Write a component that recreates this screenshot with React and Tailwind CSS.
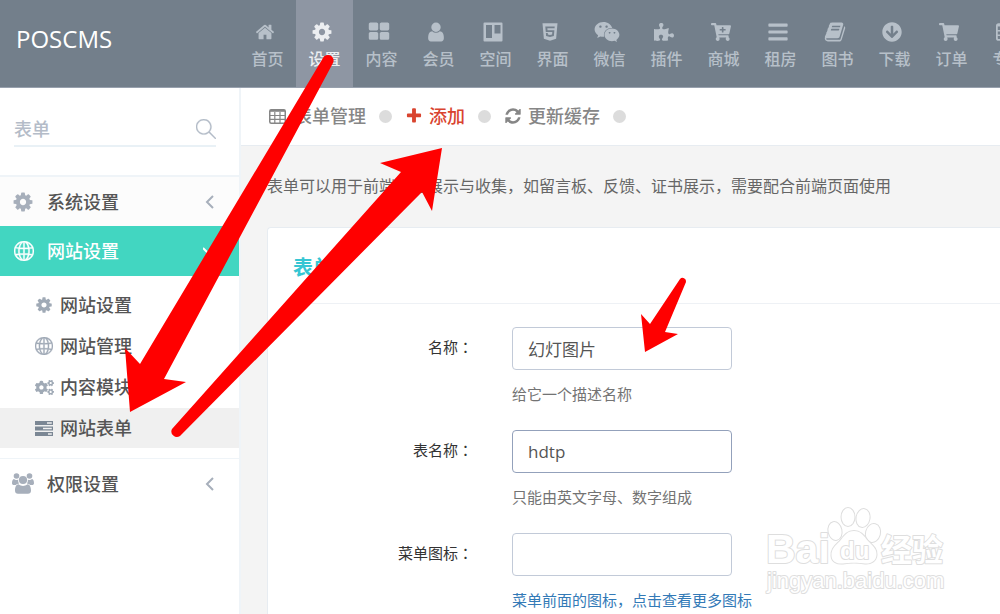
import React, { useState } from 'react';
import {
  FaArrowCircleDown,
  FaBars,
  FaCartPlus,
  FaCogs,
  FaHtml5,
  FaPuzzlePiece,
  FaShoppingCart,
  FaWeixin,
} from 'react-icons/fa';
import { SlGlobe, SlMagnifier } from 'react-icons/sl';

function Glyph({ d, className }) {
  return (
    <svg viewBox="0 0 1792 1792" fill="currentColor" className={className} aria-hidden="true">
      <path d={d} />
    </svg>
  );
}

const HOME = 'M1472 992v480q0 26-19 45t-45 19h-384v-384h-256v384h-384q-26 0-45-19t-19-45v-480q0-1 .5-3t.5-3l575-474 575 474q1 2 1 6zm223-69l-62 74q-8 9-21 11h-3q-13 0-21-7l-692-577-692 577q-12 8-24 7-13-2-21-11l-62-74q-8-10-7-23.5t11-21.5l719-599q32-26 76-26t76 26l244 204v-195q0-14 9-23t23-9h192q14 0 23 9t9 23v408l219 182q10 8 11 21.5t-7 23.5z';
const COG = 'M1152 896q0-106-75-181t-181-75-181 75-75 181 75 181 181 75 181-75 75-181zm512-109v222q0 12-8 23t-20 13l-185 28q-19 54-39 91 35 50 107 138 10 12 10 25t-9 23q-27 37-99 108t-94 71q-12 0-26-9l-138-108q-44 23-91 38-16 136-29 186-7 28-36 28h-222q-14 0-24.5-8.5t-11.5-21.5l-28-184q-49-16-90-37l-141 107q-10 9-25 9-14 0-25-11-126-114-165-168-7-10-7-23 0-12 8-23 15-21 51-66.5t54-70.5q-27-50-41-99l-183-27q-13-2-21-12.5t-8-23.5v-222q0-12 8-23t19-13l186-28q14-46 39-92-40-57-107-138-10-12-10-24 0-10 9-23 26-36 98.5-107.5t94.5-71.5q13 0 26 10l138 107q44-23 91-38 16-136 29-186 7-28 36-28h222q14 0 24.5 8.5t11.5 21.5l28 184q49 16 90 37l142-107q9-9 24-9 13 0 25 10 129 119 165 170 7 8 7 22 0 12-8 23-15 21-51 66.5t-54 70.5q26 50 41 98l183 28q13 2 21 12.5t8 23.5z';
const GRID = 'M832 1024v384q0 52-38 90t-90 38h-512q-52 0-90-38t-38-90v-384q0-52 38-90t90-38h512q52 0 90 38t38 90zm0-768v384q0 52-38 90t-90 38h-512q-52 0-90-38t-38-90v-384q0-52 38-90t90-38h512q52 0 90 38t38 90zm896 768v384q0 52-38 90t-90 38h-512q-52 0-90-38t-38-90v-384q0-52 38-90t90-38h512q52 0 90 38t38 90zm0-768v384q0 52-38 90t-90 38h-512q-52 0-90-38t-38-90v-384q0-52 38-90t90-38h512q52 0 90 38t38 90z';
const USER = 'M1536 1399q0 109-62.5 187t-150.5 78h-854q-88 0-150.5-78t-62.5-187q0-85 8.5-160.5t31.5-152 58.5-131 94-89 134.5-34.5q131 128 313 128t313-128q76 0 134.5 34.5t94 89 58.5 131 31.5 152 8.5 160.5zm-256-887q0 159-112.5 271.5t-271.5 112.5-271.5-112.5-112.5-271.5 112.5-271.5 271.5-112.5 271.5 112.5 112.5 271.5z';
const BOOK = 'M1703 478q40 57 18 129l-275 906q-19 64-76.5 107.5t-122.5 43.5h-923q-77 0-148.5-53.5t-99.5-131.5q-24-67-2-127 0-4 3-27t4-37q1-8-3-21.5t-3-19.5q2-11 8-21t16.5-23.5 16.5-23.5q23-38 45-91.5t30-91.5q3-10 .5-30t-.5-28q3-11 17-28t17-23q21-36 42-92t25-90q1-9-2.5-32t.5-28q4-13 22-30.5t22-22.5q19-26 42.5-84.5t27.5-96.5q1-8-3-25.5t-2-26.5q2-8 9-18t18-23 17-21q8-12 16.5-30.5t15-35 16-36 19.5-32 26.5-23.5 36-11.5 47.5 5.5l-1 3q38-9 51-9h761q74 0 114 56t18 130l-274 906q-36 119-71.5 153.5t-128.5 34.5h-869q-27 0-38 15-11 16-1 43 24 70 144 70h923q29 0 56-15.5t35-41.5l300-987q7-22 5-57 38 15 59 43zm-1064 2q-4 13 2 22.5t20 9.5h608q13 0 25.5-9.5t16.5-22.5l21-64q4-13-2-22.5t-20-9.5h-608q-13 0-25.5 9.5t-16.5 22.5zm-83 256q-4 13 2 22.5t20 9.5h608q13 0 25.5-9.5t16.5-22.5l21-64q4-13-2-22.5t-20-9.5h-608q-13 0-25.5 9.5t-16.5 22.5z';
const PLUS = 'M1600 736v192q0 40-28 68t-68 28h-416v416q0 40-28 68t-68 28h-192q-40 0-68-28t-28-68v-416h-416q-40 0-68-28t-28-68v-192q0-40 28-68t68-28h416v-416q0-40 28-68t68-28h192q40 0 68 28t28 68v416h416q40 0 68 28t28 68z';
const REFRESH = 'M1639 1056q0 5-1 7-64 268-268 434.5t-478 166.5q-146 0-282.5-55t-243.5-157l-129 129q-19 19-45 19t-45-19-19-45v-448q0-26 19-45t45-19h448q26 0 45 19t19 45-19 45l-137 137q71 66 161 102t187 36q134 0 250-65t186-179q11-17 53-117 8-23 30-23h192q13 0 22.5 9.5t9.5 22.5zm25-800v448q0 26-19 45t-45 19h-448q-26 0-45-19t-19-45 19-45l138-138q-148-137-349-137-134 0-250 65t-186 179q-11 17-53 117-8 23-30 23h-199q-13 0-22.5-9.5t-9.5-22.5v-7q65-268 270-434.5t480-166.5q146 0 284 55.5t245 156.5l130-129q19-19 45-19t45 19 19 45z';

function TrelloIcon() {
  return (
    <svg viewBox="0 0 20 20" fill="currentColor" fillRule="evenodd" className="size-5" aria-hidden="true">
      <path d="M1.5 0.5h17a1 1 0 0 1 1 1v17a1 1 0 0 1-1 1h-17a1 1 0 0 1-1-1v-17a1 1 0 0 1 1-1zM3 3v13h6v-13zM11.5 3v8.5h6v-8.5z" />
    </svg>
  );
}

function UsersIcon() {
  return (
    <svg viewBox="0 0 22 21" fill="currentColor" className="h-[21px] w-[22px]" aria-hidden="true">
      <circle cx="4.5" cy="3" r="2.8" />
      <circle cx="17.5" cy="3" r="2.8" />
      <circle cx="11" cy="7" r="4.1" />
      <path d="M2 6C4 7.500 5 7 6.200 6.400C6 8 6.300 9.300 7.200 10.500C5.700 10.600 4.700 11 4 12H2C.7 12 0 11.200 0 10.200C0 8.500.5 6 2 6z" />
      <path d="M20 6C18 7.500 17 7 15.800 6.400C16 8 15.700 9.300 14.800 10.500C16.300 10.600 17.300 11 18 12H20C21.300 12 22 11.200 22 10.200C22 8.500 21.500 6 20 6z" />
      <path d="M6.500 11.300C9.500 13.500 12.500 13.500 15.500 11.300C18 11.300 19 14.500 19 17.500C19 19.700 17.800 20.800 16 20.800H6C4.200 20.800 3 19.700 3 17.500C3 14.500 4 11.300 6.500 11.300z" />
    </svg>
  );
}

function TableIcon({ className }) {
  return (
    <svg viewBox="0 0 17 15" fill="none" stroke="currentColor" className={className} aria-hidden="true">
      <rect x="0.75" y="0.75" width="15.5" height="13.5" rx="1.5" strokeWidth="1.5" />
      <path d="M1 1.8h15" strokeWidth="2" />
      <path d="M1 6.5h15M1 10.3h15M5.8 3v11M11 3v11" strokeWidth="1.2" />
    </svg>
  );
}

function TasksIcon() {
  return (
    <svg viewBox="0 0 18 15" fill="currentColor" fillRule="evenodd" className="h-[15px] w-[18px]" aria-hidden="true">
      <path d="M0 0h18v4h-18zM12 1.3v1.4h4.8v-1.4z" />
      <path d="M0 5.5h18v4h-18zM8 6.8v1.4h8.8v-1.4z" />
      <path d="M0 11h18v4h-18zM13 12.3v1.4h3.8v-1.4z" />
    </svg>
  );
}

function Chevron({ open }) {
  return (
    <svg viewBox="0 0 12 14" fill="none" stroke="currentColor" strokeWidth="2" className="h-3.5 w-3" aria-hidden="true">
      <path d={open ? 'M0 4l6 6 6-6' : 'M10 1L4 7L10 13'} />
    </svg>
  );
}

const navItems = [
  { label: '首页', icon: <Glyph d={HOME} className="size-5" /> },
  { label: '设置', icon: <Glyph d={COG} className="size-[22px]" />, active: true },
  { label: '内容', icon: <Glyph d={GRID} className="size-[22px]" /> },
  { label: '会员', icon: <Glyph d={USER} className="size-[22px]" /> },
  { label: '空间', icon: <TrelloIcon /> },
  { label: '界面', icon: <FaHtml5 className="size-5" /> },
  { label: '微信', icon: <FaWeixin className="size-[26px]" /> },
  { label: '插件', icon: <FaPuzzlePiece className="size-5" /> },
  { label: '商城', icon: <FaCartPlus className="size-5" /> },
  { label: '租房', icon: <FaBars className="size-[22px]" /> },
  { label: '图书', icon: <Glyph d={BOOK} className="size-[22px]" /> },
  { label: '下载', icon: <FaArrowCircleDown className="size-5" /> },
  { label: '订单', icon: <FaShoppingCart className="size-5" /> },
  { label: '专题', icon: <TableIcon className="h-[18px] w-5" /> },
];

const subItems = [
  { label: '网站设置', icon: <Glyph d={COG} className="size-[18px]" /> },
  { label: '网站管理', icon: <SlGlobe className="size-[18px]" stroke="currentColor" strokeWidth="20" /> },
  { label: '内容模块', icon: <FaCogs className="size-[19px]" /> },
  { label: '网站表单', icon: <TasksIcon />, active: true },
];

function TopNav() {
  return (
    <header className="flex h-[88px] overflow-hidden border-b border-[#98a1ae] bg-[#737f8b]">
      <a href="#" className="flex w-[239px] shrink-0 items-center pb-2.5 pl-4 text-2xl font-medium text-white">POSCMS</a>
      <nav className="flex">
        {navItems.map(item => (
          <a
            key={item.label}
            href="#"
            className={`flex w-[57px] shrink-0 flex-col items-center pt-5 font-medium ${item.active ? 'bg-[#8e96a3] text-[#eceef1]' : 'text-[#b7c0c9]'}`}
          >
            <span className="flex h-6 items-center pr-1.5">{item.icon}</span>
            <span className="mt-[3px] text-base leading-6">{item.label}</span>
          </a>
        ))}
      </nav>
    </header>
  );
}

function MenuRow({ icon, label, open, className }) {
  return (
    <a href="#" className={`flex items-center pr-6 pl-3 text-lg ${className}`}>
      <span className="flex w-[35px] items-center">{icon}</span>
      <span className="flex-1">{label}</span>
      <Chevron open={open} />
    </a>
  );
}

function Sidebar() {
  return (
    <aside className="w-[241px] shrink-0 border-r-2 border-[#eff4f8] bg-white font-medium text-[#555]">
      <form className="mr-[23px] ml-3.5 flex h-[59px] items-center border-b-2 border-[#e9f1f6] pt-6">
        <input
          aria-label="搜索"
          placeholder="表单"
          className="w-full min-w-0 bg-transparent text-lg outline-none placeholder:text-[#b4bcc8]"
        />
        <button type="button" aria-label="搜索" className="text-[#b4bcc8]">
          <SlMagnifier className="size-5" stroke="currentColor" strokeWidth="15" />
        </button>
      </form>
      <ul className="mt-7 border-t-2 border-[#eff4f8]">
        <li>
          <MenuRow
            label="系统设置"
            icon={<Glyph d={COG} className="size-[22px]" />}
            className="h-[49px] bg-[#fcfcfc] [&_svg]:text-[#a7afbb]"
          />
        </li>
        <li>
          <MenuRow
            label="网站设置"
            open
            icon={<SlGlobe className="ml-0.5 size-5" stroke="currentColor" strokeWidth="20" />}
            className="h-[50px] bg-[#42d6c1] text-white"
          />
          <ul className="flex flex-col gap-px pt-[9px] pb-2.5">
            {subItems.map(item => (
              <li key={item.label}>
                <a href="#" className={`flex h-10 items-center pl-[35px] text-lg ${item.active ? 'bg-[#f0f0f0]' : ''}`}>
                  <span className={`flex w-[25px] items-center ${item.active ? 'text-[#7b8794]' : 'text-[#a0aab6]'}`}>{item.icon}</span>
                  {item.label}
                </a>
              </li>
            ))}
          </ul>
        </li>
        <li className="border-t border-[#eff4f8]">
          <MenuRow label="权限设置" icon={<UsersIcon />} className="h-[49px] [&_svg]:text-[#a7afbb]" />
        </li>
      </ul>
    </aside>
  );
}

function Dot() {
  return <i className="size-[13px] shrink-0 rounded-full bg-[#dcdcdc]" />;
}

function Toolbar() {
  return (
    <div className="flex h-[58px] items-center gap-[13px] border-b border-[#e7ecf1] bg-white pb-px pl-7 text-lg font-medium whitespace-nowrap text-[#868686]">
      <a href="#" className="flex items-center gap-2">
        <TableIcon className="h-[15px] w-[17px]" />
        表单管理
      </a>
      <Dot />
      <a href="#" className="flex items-center gap-1.5 text-[#d9442f]">
        <Glyph d={PLUS} className="size-[18px]" />
        添加
      </a>
      <Dot />
      <a href="#" className="flex items-center gap-1.5">
        <Glyph d={REFRESH} className="size-[18px]" />
        更新缓存
      </a>
      <Dot />
    </div>
  );
}

function Field({ id, label, value, onChange, focused, children }) {
  return (
    <div className="flex h-[103px]">
      <label htmlFor={id} className="h-[43px] w-[180px] shrink-0 text-right text-[15px] leading-10 text-[#333]">
        {label}
        <span className="font-['Noto_Sans_CJK_JP']">：</span>
      </label>
      <div className="pl-[39px]">
        <input
          id={id}
          value={value}
          onChange={onChange}
          className={`block h-[43px] w-[220px] rounded border bg-white px-[15px] text-[17px] text-[#555] outline-none ${focused ? 'border-[#93a1bb]' : 'border-[#c2cad8]'}`}
        />
        <p className="mt-3 text-[15px] leading-6 whitespace-nowrap text-[#737373]">{children}</p>
      </div>
    </div>
  );
}

function Arrows() {
  return (
    <svg width="1000" height="614" fill="#f00" className="pointer-events-none absolute top-0 left-0" aria-hidden="true">
      <path d="M323 58A5.5 5.5 0 0 1 333 63L164 379L186 382L130 412L125 348L140 364Z" />
      <path d="M172 429L401 172L380 163L442 148L432 211L422 192L180 436A5.5 5.5 0 0 1 172 429Z" />
      <path d="M680 279A3.5 3.5 0 0 1 686 282L665 332L678 334L645 352L641 314L650 324Z" />
    </svg>
  );
}

function Watermark() {
  return (
    <svg
      width="190"
      height="96"
      viewBox="0 0 190 96"
      fill="#fff"
      stroke="#dedede"
      strokeWidth="2"
      strokeLinejoin="round"
      paintOrder="stroke"
      className="pointer-events-none absolute top-[502px] left-[762px] font-['Liberation_Sans','Noto_Sans_CJK_SC',sans-serif]"
      aria-hidden="true"
    >
      <text x="4" y="61" fontSize="41" fontWeight="700">Bai</text>
      <ellipse cx="73" cy="29" rx="6.5" ry="9" transform="rotate(-12 73 29)" />
      <ellipse cx="86" cy="15" rx="6.5" ry="9" />
      <ellipse cx="101" cy="16" rx="6.5" ry="9" transform="rotate(10 101 16)" />
      <ellipse cx="111" cy="31" rx="7" ry="9" transform="rotate(15 111 31)" />
      <path d="M92 29C85 29 82 34 78 39C73 44 69 47 69.5 54C70 60 75 62 81 61.5C87 60.5 97 60.5 103 61.5C109 62 114 59 114.5 53C115 47 111 44 106 39C102 34 99 29 92 29Z" />
      <text x="78" y="57" fontSize="24" fontWeight="700">du</text>
      <text x="119" y="59" fontSize="31" fontWeight="700">经验</text>
      <text x="5" y="86" fontSize="22">jingyan.baidu.com</text>
    </svg>
  );
}

export default function App() {
  const [form, setForm] = useState({ name: '幻灯图片', table: 'hdtp', icon: '' });

  const update = key => e => setForm({ ...form, [key]: e.target.value });

  return (
    <div className="relative flex min-h-screen flex-col overflow-hidden bg-[#f4f4f4] font-['Open_Sans','Noto_Sans_CJK_SC',sans-serif]">
      <TopNav />
      <div className="flex flex-1">
        <Sidebar />
        <main className="flex min-w-0 flex-1 flex-col">
          <Toolbar />
          <p className="py-7 pl-[26px] text-base leading-[25px] whitespace-nowrap text-[#666]">
            表单可以用于前端数据展示与收集，如留言板、反馈、证书展示，需要配合前端页面使用
          </p>
          <section className="ml-[26px] flex-1 rounded-tl border-t border-l border-[#e7ecf1] bg-white pl-[25px]">
            <h2 className="h-[76px] border-b border-[#eef1f5] pt-6 text-xl leading-8 font-bold text-[#36c6d3]">表单</h2>
            <form className="h-[310px] overflow-hidden pt-[23px]">
              <Field id="name" label="名称" value={form.name} onChange={update('name')}>
                给它一个描述名称
              </Field>
              <Field id="table" label="表名称" value={form.table} onChange={update('table')} focused>
                只能由英文字母、数字组成
              </Field>
              <Field id="icon" label="菜单图标" value={form.icon} onChange={update('icon')}>
                <a href="#" className="text-[#337ab7]">菜单前面的图标，点击查看更多图标</a>
              </Field>
            </form>
          </section>
        </main>
      </div>
      <Watermark />
      <Arrows />
    </div>
  );
}
